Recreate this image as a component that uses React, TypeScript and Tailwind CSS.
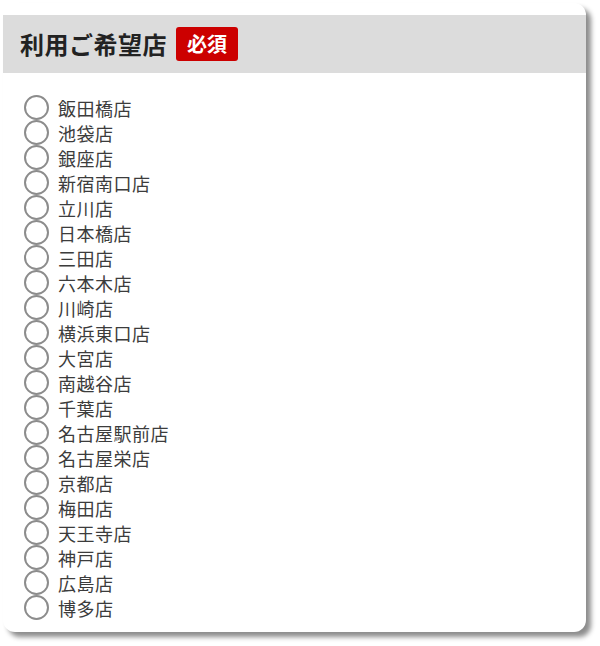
const stores = [
  '飯田橋店',
  '池袋店',
  '銀座店',
  '新宿南口店',
  '立川店',
  '日本橋店',
  '三田店',
  '六本木店',
  '川崎店',
  '横浜東口店',
  '大宮店',
  '南越谷店',
  '千葉店',
  '名古屋駅前店',
  '名古屋栄店',
  '京都店',
  '梅田店',
  '天王寺店',
  '神戸店',
  '広島店',
  '博多店',
]

export default function App() {
  return (
    <div
      className="w-[600px] h-[646px] bg-white pt-[3px] pl-[3px]"
      style={{ fontFamily: '"Noto Sans CJK JP", "Noto Sans", sans-serif' }}
    >
      <div className="w-[583px] h-[629px] bg-white rounded-[12px] pt-[12px] shadow-[5px_5px_5px_rgba(0,0,0,0.45)]">
        {/* Header */}
        <div className="h-[58px] bg-[#dcdcdc] flex items-center pl-[17px] gap-[9px]">
          <h2 className="text-[24px] font-bold text-[#222] leading-none tracking-[0.5px]">利用ご希望店</h2>
          <span className="h-[34px] w-[62px] rounded-[3px] bg-[#cc0000] text-white text-[20px] font-bold flex items-center justify-center leading-none">
            必須
          </span>
        </div>

        {/* Options */}
        <div className="pt-[22px] pl-[21px] flex flex-col">
          {stores.map((name) => (
            <label key={name} className="h-[25px] flex items-center gap-[9px] cursor-pointer">
              <span className="w-[25px] h-[25px] rounded-full border-2 border-[#8c8c8c] bg-white shrink-0" />
              <span className="text-[18px] text-[#3c3c3c] leading-none tracking-[0.5px]">{name}</span>
            </label>
          ))}
        </div>
      </div>
    </div>
  )
}
